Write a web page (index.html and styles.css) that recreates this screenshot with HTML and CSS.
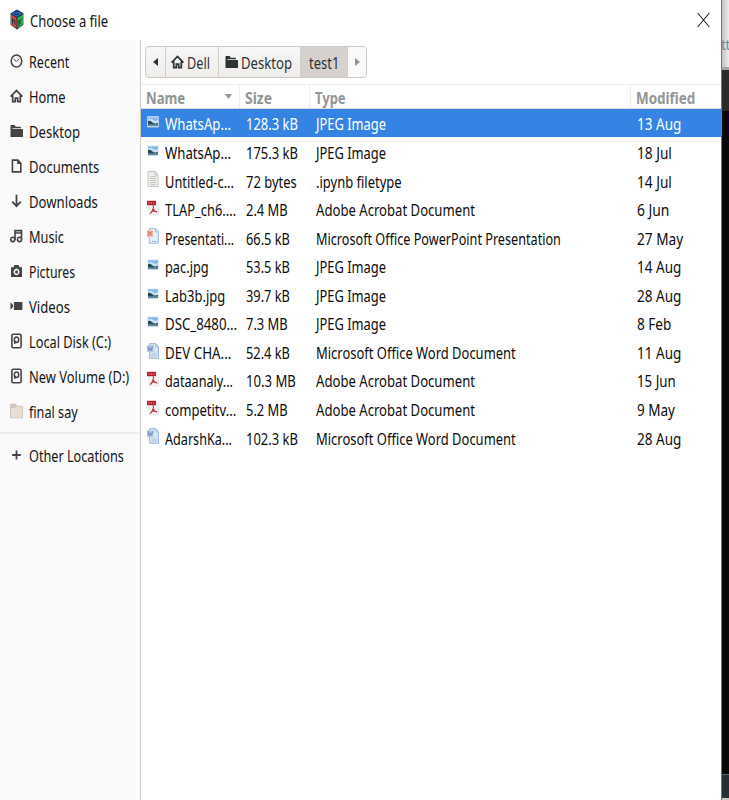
FILE: index.html
```html
<!DOCTYPE html>
<html lang="en">
<head>
<meta charset="utf-8">
<title>Choose a file</title>
<link rel="stylesheet" href="styles.css">
</head>
<body>
<svg class="defs" width="0" height="0">
  <symbol id="home" viewBox="0 0 13 14"><path d="M.6 7.6 6.5 1.5l5.9 6.1M2.7 6.5v6.2h2.6V9.2h2.4v3.5h2.6V6.5" fill="none" stroke="currentColor" stroke-width="1.7"/></symbol>
  <symbol id="folder" viewBox="0 0 13 14"><path d="M.5 13V1.8q0-.8.8-.8h3.4l1 1.7h4.5q.8 0 .8.8v.8H3.2q-1 0-1 1V13z" fill="currentColor"/><path d="M1.6 5.6q0-.5.5-.5h10.4q.5 0 .5.5v7q0 .4-.5.4H1.6z" fill="currentColor"/></symbol>
  <symbol id="disk" viewBox="0 0 13 16"><rect x="1.9" y="1.3" width="9.2" height="13.4" rx="1.3" fill="none" stroke="currentColor" stroke-width="1.6"/><ellipse cx="6.5" cy="6.8" rx="2.2" ry="2.8" fill="none" stroke="currentColor" stroke-width="1.5"/><path d="M4 6.6v4.6l3.2-1.8z" fill="currentColor"/></symbol>
  <symbol id="image" viewBox="0 0 12 16"><rect x=".3" y="2.3" width="11.4" height="11" fill="#e6edf2"/><rect x="1" y="3.3" width="10" height="4.5" fill="#83b8ed"/><path d="M1 5.4q3-1.5 5 .4t5 .2v3H1z" fill="#c5e0f6"/><path d="M1 6.9q2.2-.6 4.2 1.3t5.8.8v1.9H1z" fill="#254b50"/><path d="M1 10.2h10v2H1z" fill="#62869b"/></symbol>
  <symbol id="text" viewBox="0 0 12 16"><path d="M1 .5h7.3L11 3.7v11.8H1z" fill="#efefec" stroke="#c6c6c1"/><path d="M8 .7v3.4h3M3 5.5h6M3 7.5h6M3 9.5h6M3 11.5h6M3 13.3h6" fill="none" stroke="#c0c0bc" stroke-width=".9"/></symbol>
  <symbol id="pdf" viewBox="0 0 12 16"><path d="M2 1h7l2.5 3v11H2z" fill="#f5f3f3" stroke="#ddd" stroke-width=".6"/><path d="M0 .8h9v4.4H0z" fill="#b3202d"/><path d="M2 2v2M4.4 2v2M6.8 2v2" stroke="#d8868d" stroke-width=".8"/><path d="M5.8 5.6c.9 0 .8 1.6.2 3.4-.8 2.4-2 4.2-3 4.6M6.1 8.8c.8 1.9 2.3 3.3 4.4 3.2M4 12.1c1.4-1 3.7-1.3 5.8-.6" fill="none" stroke="#b83340" stroke-width="1.1"/></symbol>
  <symbol id="ppt" viewBox="0 0 12 16"><path d="M2.2.6h6.6l2.6 3v11.7H2.2z" fill="#e3edf9" stroke="#94aed0" stroke-width=".8"/><path d="M8.5.8v3.1h2.8M5 13.5h4.8" fill="none" stroke="#8ea8d4" stroke-width=".8"/><path d="M0 2.4h6v6.4H0z" fill="#f0b7a4"/><path d="m1 3.4 3.9 4.3M5 3.3 1 7.9" stroke="#e07a60" stroke-width="1.1"/></symbol>
  <symbol id="word" viewBox="0 0 12 16"><path d="M2.6.6h6.2l2.7 3v11.7H2.6z" fill="#d5e3f6" stroke="#8daad6" stroke-width=".8"/><path d="M8.6.8v3.1h2.8M4.5 11h5.2M4.5 13h5.2" fill="none" stroke="#a3b9e0" stroke-width=".8"/><path d="M0 2.1h6.5v6.8H0z" fill="#b4c6e5"/><path d="m1 3.6 1.1 4 1.2-3 1 3 1.3-4" fill="none" stroke="#6a89bf" stroke-width=".9"/></symbol>
</svg>
<div class="screen">
  <section class="dialog">
    <header class="titlebar">
      <svg class="logo" viewBox="0 0 14 20" preserveAspectRatio="none"><path d="M7 .5 13.4 4v11L7 19.5.6 15V4z" fill="#202c2c"/><path d="M1 5.3 6.5 8.4v9.9L1 14.6z" fill="#e8404a"/><path d="M7.5 8.4 13 5.3v9.3l-5.5 3.7z" fill="#2fb14f"/><path d="M7 .9 12.8 4.3 7 7.6 1.2 4.3z" fill="#2861bc"/><path d="M4.5 4.7q2.2 1.5 4.6-.1M9 2.7Q6.5 1.8 5 3.2M2.5 14V8.2M4.8 9.8v5.4M2.5 10.2l2.3 2.2M9 16.3v-6m0 3 2.4-4M9.4 12.5l2 1.6" fill="none" stroke="#1b2c33" stroke-width=".9"/></svg>
      <span class="t" data-w="78">Choose a file</span>
      <svg class="close" viewBox="0 0 13 16"><path d="m.7 1 11.6 14M12.3 1 .7 15" stroke="#222" stroke-width="1.1"/></svg>
    </header>
    <div class="body">
      <nav class="side">
        <a><svg viewBox="0 0 13 14"><ellipse cx="6.5" cy="7" rx="5.3" ry="6" fill="none" stroke="currentColor" stroke-width="1.5"/><path d="m3.7 5 2.6 2.5L9 4.8" fill="none" stroke="currentColor"/></svg><span class="t" data-w="40">Recent</span></a>
        <a><svg viewBox="0 0 13 14"><use href="#home"/></svg><span class="t" data-w="37">Home</span></a>
        <a><svg viewBox="0 0 13 14"><use href="#folder"/></svg><span class="t" data-w="51">Desktop</span></a>
        <a><svg viewBox="0 0 13 14"><path d="M2.4 1.1H8l2.8 3.2v8.6H2.4z" fill="none" stroke="currentColor" stroke-width="1.6"/><path d="M7.2 1v4h3.6V4L8 1z" fill="currentColor"/></svg><span class="t" data-w="70">Documents</span></a>
        <a><svg viewBox="0 0 13 14"><path d="M6.5.8V12M2.2 7.7l4.3 4.5 4.3-4.5" fill="none" stroke="currentColor" stroke-width="1.8"/></svg><span class="t" data-w="69">Downloads</span></a>
        <a><svg viewBox="0 0 13 14"><path d="M5 11V1.6h6.5V10M5 4h6.5" fill="none" stroke="currentColor" stroke-width="1.6"/><ellipse cx="2.8" cy="10.4" rx="2" ry="2.2" fill="none" stroke="currentColor" stroke-width="1.6"/><ellipse cx="9.5" cy="10.4" rx="2" ry="2.2" fill="none" stroke="currentColor" stroke-width="1.6"/></svg><span class="t" data-w="35">Music</span></a>
        <a><svg viewBox="0 0 13 14"><path fill-rule="evenodd" d="M1 3.3h2.5L4.4 1h4.2l.9 2.3H12V13H1zM6.5 4.6a2.9 3.3 0 1 0 .01 0z" fill="currentColor"/><ellipse cx="6.5" cy="8" rx="1.5" ry="1.8" fill="currentColor"/></svg><span class="t" data-w="46">Pictures</span></a>
        <a><svg viewBox="0 0 13 14"><path d="M3.9 3h8.5v8H3.9zM.5 3.2 3 6.1v1.8L.5 10.8z" fill="currentColor"/></svg><span class="t" data-w="41">Videos</span></a>
        <a><svg class="tall" viewBox="0 0 13 16"><use href="#disk"/></svg><span class="t" data-w="82">Local Disk (C:)</span></a>
        <a><svg class="tall" viewBox="0 0 13 16"><use href="#disk"/></svg><span class="t" data-w="100">New Volume (D:)</span></a>
        <a><svg class="tall" viewBox="0 0 13 16"><path d="M.6 1.2h4.9l1 2h5.9v11.6H.6z" fill="#d4c9c0" stroke="#c2b7ae" stroke-width=".8"/><path d="M1 5h4.5l1.3-1.5H12v11H1z" fill="#e7ded7"/></svg><span class="t" data-w="49">final say</span></a>
        <a class="other"><svg viewBox="0 0 13 14"><path d="M6.5 2.5v9M2.2 7h8.6" stroke="currentColor" stroke-width="1.8"/></svg><span class="t" data-w="95">Other Locations</span></a>
      </nav>
      <main class="main">
        <div class="crumbs">
          <b class="arrow"><svg viewBox="0 0 5 8"><path d="M5 0v8L0 4z"/></svg></b>
          <b class="dell"><svg class="ic" viewBox="0 0 13 14"><use href="#home"/></svg><span class="t" data-w="23">Dell</span></b>
          <b class="desk"><svg class="ic" viewBox="0 0 13 14"><use href="#folder"/></svg><span class="t" data-w="51">Desktop</span></b>
          <b class="current"><span class="t" data-w="30">test1</span></b>
          <b class="next"><svg viewBox="0 0 5 8"><path d="M0 0v8l5-4z"/></svg></b>
        </div>
        <div class="head">
          <span><i class="t" data-w="39">Name</i><svg viewBox="0 0 7 5"><path d="M0 0h7L3.5 5z"/></svg></span>
          <span><i class="t" data-w="27">Size</i></span>
          <span><i class="t" data-w="31">Type</i></span>
          <span><i class="t" data-w="59">Modified</i></span>
        </div>
        <div class="rows" id="rows"></div>
      </main>
    </div>
  </section>
  <aside class="behind">
    <div class="page"><span>tt</span></div>
    <div class="bar"></div>
    <div class="dark"></div>
    <div class="task"></div>
    <div class="edge"></div>
  </aside>
</div>
<script>
// icon, [name, width], [size, width], [type, width], [modified, width]
const jpeg = ["JPEG Image", 70], acro = ["Adobe Acrobat Document", 159], word = ["Microsoft Office Word Document", 200];
const files = [
  ["image", ["WhatsAp...", 66], ["128.3 kB", 52], jpeg, ["13 Aug", 44]],
  ["image", ["WhatsAp...", 66], ["175.3 kB", 52], jpeg, ["18 Jul", 35]],
  ["text", ["Untitled-c...", 69], ["72 bytes", 51], [".ipynb filetype", 86], ["14 Jul", 35]],
  ["pdf", ["TLAP_ch6....", 71], ["2.4 MB", 42], acro, ["6 Jun", 32]],
  ["ppt", ["Presentati...", 69], ["66.5 kB", 44], ["Microsoft Office PowerPoint Presentation", 245], ["27 May", 46]],
  ["image", ["pac.jpg", 44], ["53.5 kB", 44], jpeg, ["14 Aug", 44]],
  ["image", ["Lab3b.jpg", 60], ["39.7 kB", 44], jpeg, ["28 Aug", 44]],
  ["image", ["DSC_8480...", 72], ["7.3 MB", 42], jpeg, ["8 Feb", 34]],
  ["word", ["DEV CHA...", 66], ["52.4 kB", 44], word, ["11 Aug", 44]],
  ["pdf", ["dataanaly...", 68], ["10.3 MB", 50], acro, ["15 Jun", 39]],
  ["pdf", ["competitv...", 71], ["5.2 MB", 42], acro, ["9 May", 38]],
  ["word", ["AdarshKa...", 67], ["102.3 kB", 52], word, ["28 Aug", 44]]
];
document.getElementById("rows").innerHTML = files.map(([icon, ...cells], i) =>
  `<div class="row${i ? "" : " selected"}"><svg viewBox="0 0 12 16"><use href="#${icon}"/></svg>` +
  cells.map(([s, w]) => `<span class="t" data-w="${w}">${s}</span>`).join("") + `</div>`).join("");

document.querySelectorAll(".t").forEach(el => {
  const natural = el.offsetWidth, w = +el.dataset.w;
  el.style.transform = `scaleX(${w / natural})`;
  el.style.marginRight = `${w - natural}px`;
});
</script>
</body>
</html>
```

FILE: styles.css
```css
* { box-sizing: border-box; }
body { margin: 0; overflow: hidden; font: 16px/20px "Noto Sans", "Open Sans", sans-serif; color: #161616; }
.defs { display: block; height: 0; }
.screen { display: flex; width: 729px; height: 800px; background: #fff; }
.dialog { width: 721px; display: flex; flex-direction: column; }
.t { display: inline-block; white-space: pre; transform-origin: 0 50%; font-style: normal; flex: none; }

.titlebar { height: 40px; display: flex; align-items: center; padding: 2px 11px 0 10px; }
.logo { width: 14px; height: 21px; margin: -3px 5.5px 0 0; }
.close { width: 13px; height: 16px; margin: -3px 0 0 auto; }

.body { flex: 1; display: flex; min-height: 0; }
.side { width: 141px; padding-top: 4px; background: #fafafa; border-right: 1px solid #cfcac6; }
.side a { display: flex; align-items: center; height: 35px; padding-left: 10px; }
.side svg { width: 13px; height: 14px; margin: -2px 5.5px 0 0; color: #444; flex: none; }
.side svg.tall { height: 16px; margin-top: -1px; }
.side .other { height: 45px; margin-top: 3px; border-top: 2px solid #ececec; }

.main { flex: 1; min-width: 0; display: flex; flex-direction: column; }
.crumbs { display: flex; width: 222px; height: 32px; margin: 6px 0 6px 4px; border: 1px solid #cfc9c4; border-radius: 4px; overflow: hidden; background: linear-gradient(#f8f7f7, #eeedec); color: #2e3436; flex: none; }
.crumbs b { display: flex; align-items: center; font-weight: 400; border-right: 1px solid #d3cdc8; padding-top: 2px; }
.crumbs svg { width: 5px; height: 8px; fill: #2e3436; margin-top: -3px; }
.crumbs svg.ic { width: 13px; height: 14px; margin-right: 2.5px; flex: none; }
.crumbs .arrow { width: 20px; justify-content: center; }
.crumbs .dell { width: 53px; padding-left: 5px; }
.crumbs .desk { width: 82px; padding-left: 6px; }
.crumbs .current { width: 47px; padding-left: 8px; background: #d6d1cd; }
.crumbs .next { flex: 1; border: 0; background: #fafafa; justify-content: center; }
.crumbs .next svg { fill: #929595; }

.head { display: grid; grid-template-columns: 99px 70px 321px 1fr; height: 25px; border-top: 1px solid #ededed; border-bottom: 1px solid #dcdcdc; color: #929595; font-weight: 700; font-size: 15.5px; flex: none; }
.head span { display: flex; align-items: center; padding: 2px 0 0 4.5px; border-right: 1px solid #efefef; }
.head span:last-child { border: 0; }
.head svg { width: 7px; height: 5px; margin: -3px 7px 0 auto; fill: #929595; }

.row { display: grid; grid-template-columns: 23.7px 81px 70px 321px 1fr; align-items: center; height: 28.55px; color: #0c0c0c; }
.row.selected { height: 28px; margin-bottom: .55px; background: #3584e4; color: #fff; }
.row svg { width: 12px; height: 16px; margin: -2px 0 0 6px; }
.row span { min-width: 0; margin-top: 2.5px; justify-self: start; }

.behind { width: 8px; display: flex; flex-direction: column; border-left: 1px solid #777; overflow: hidden; }
.page { height: 70px; background: linear-gradient(90deg, #c2c2c2, #ededed); border-bottom: 3px solid #a5a5a5; padding-top: 35px; color: #71869b; font-size: 14px; overflow: hidden; }
.page span { display: block; margin-left: -1px; letter-spacing: -.5px; }
.bar { height: 41px; background: #2b2b2b; }
.dark { flex: 1; background: #080808; }
.task { height: 24px; background: #243035; border-top: 1px solid #5b6366; }
.edge { height: 2px; background: #c9c9c9; }
```
